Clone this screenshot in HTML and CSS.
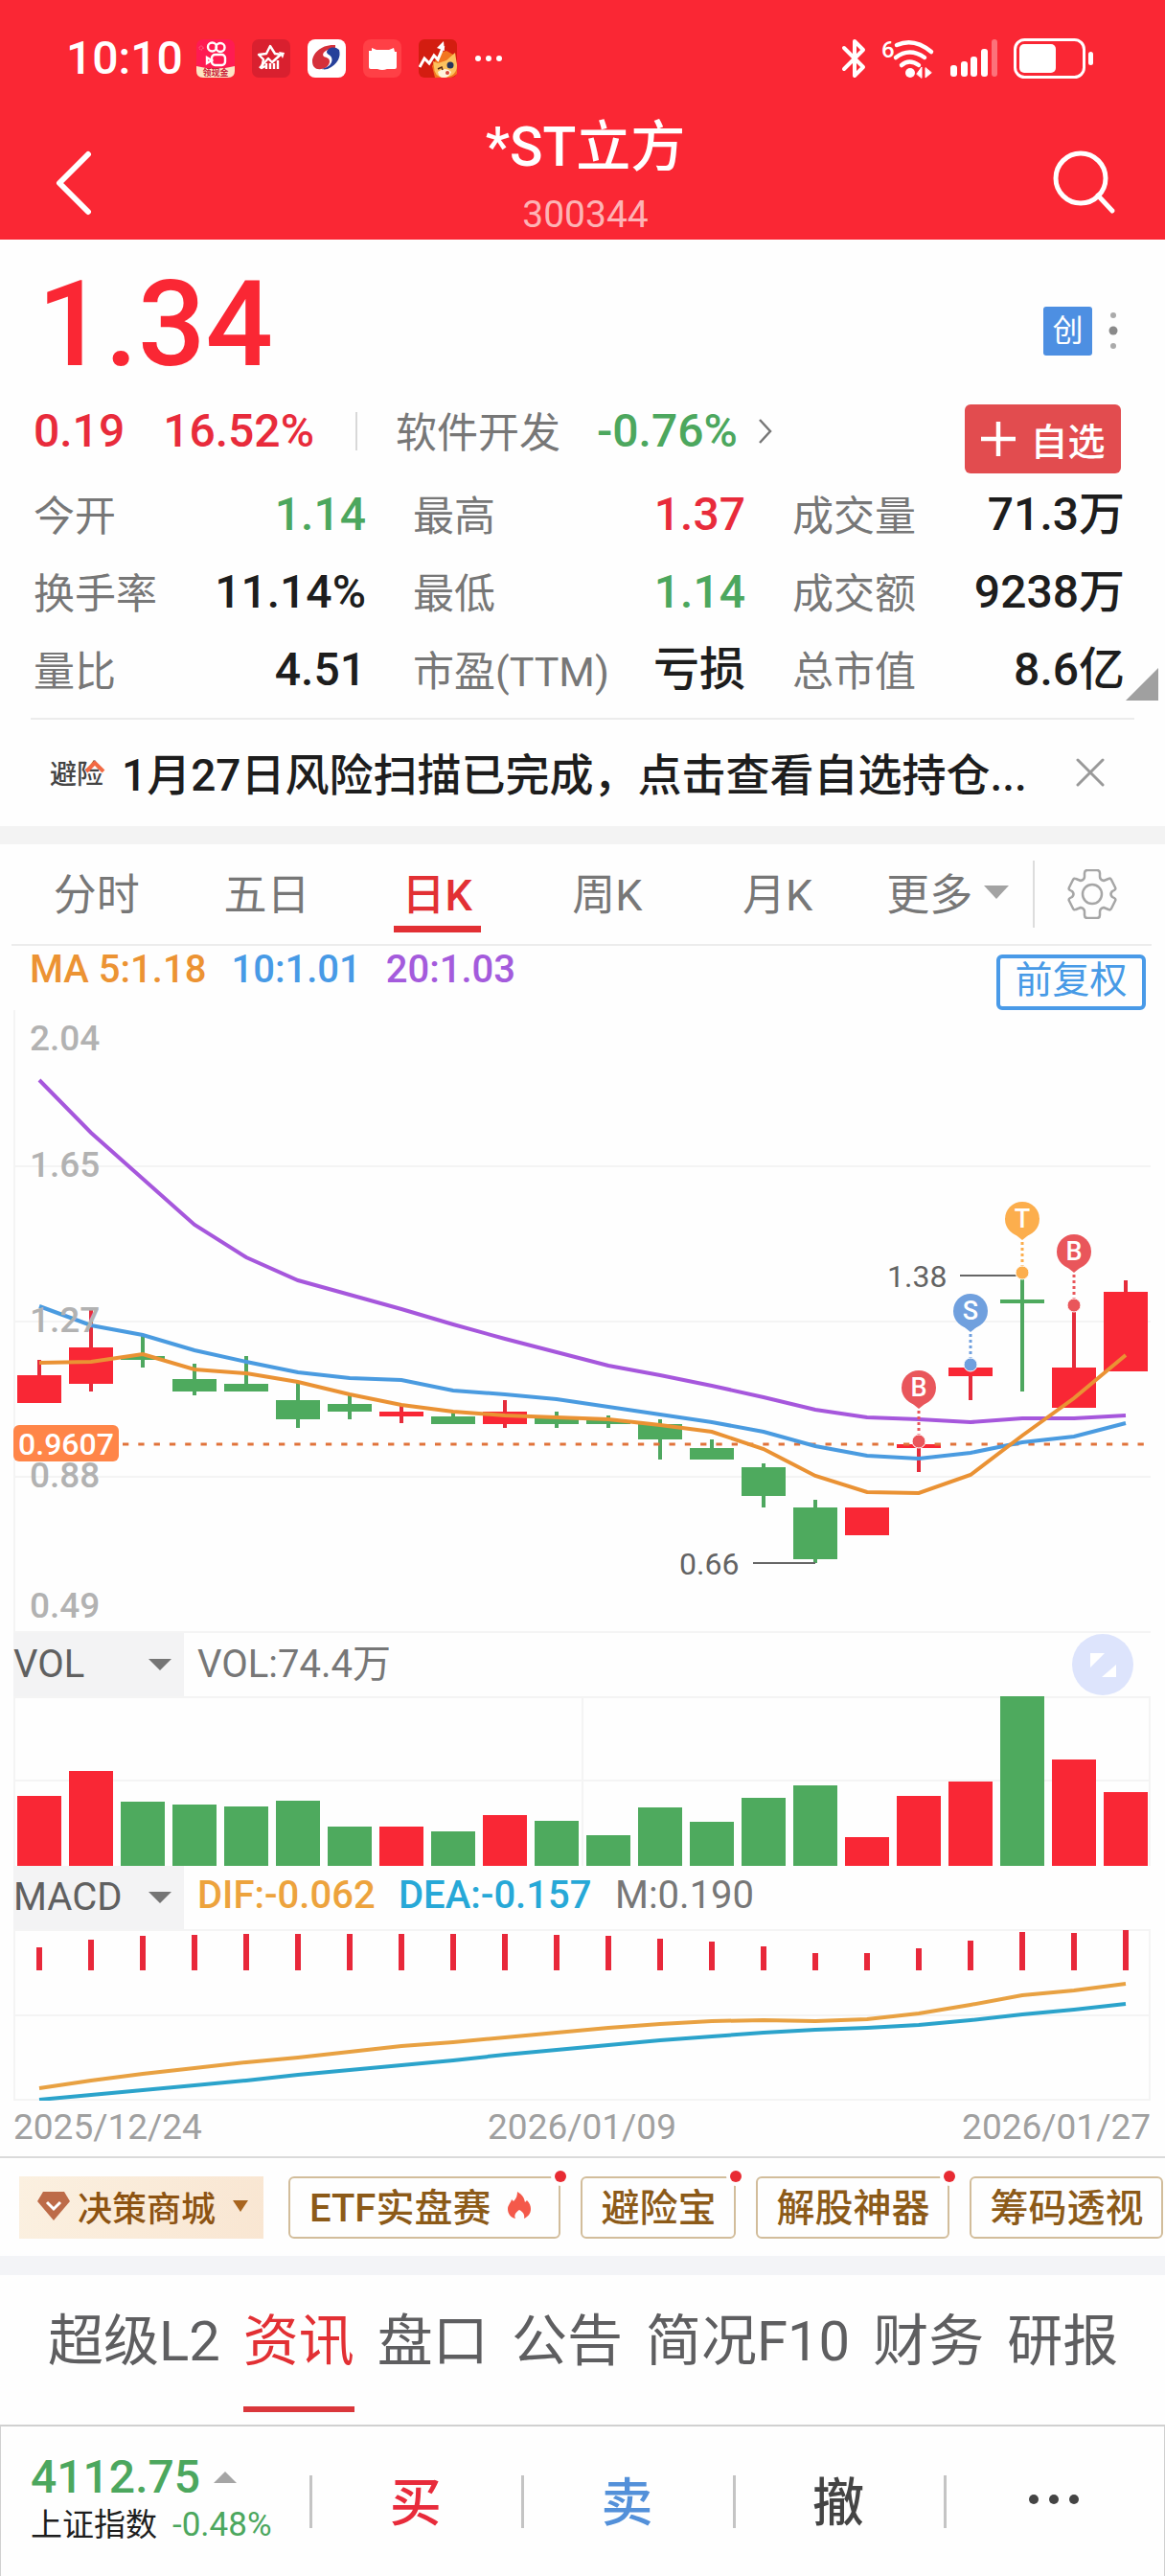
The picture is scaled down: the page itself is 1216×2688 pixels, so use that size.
FILE: index.html
```html
<!DOCTYPE html>
<html lang="zh-CN">
<head>
<meta charset="utf-8">
<meta name="viewport" content="width=device-width, initial-scale=1">
<title>*ST立方 300344</title>
<link rel="stylesheet" href="styles.css">
</head>
<body>
<header class="top">
  <div class="status">
    <span class="clock">10:10</span>
    <div class="apps">
      <svg width="40" height="40" viewBox="0 0 40 40"><rect width="40" height="40" rx="7" fill="#ff1b52"/><g fill="none" stroke="#fff" stroke-width="2.4"><circle cx="16.500" cy="8" r="4.500"/><circle cx="25" cy="8.500" r="4.500"/><rect x="16" y="16" width="14" height="11" rx="3.500"/><path d="M16 22l-5-3v6z"/></g><circle cx="5" cy="9" r="2" fill="none" stroke="#ff8aa0" stroke-dasharray="1 1"/><path d="M0 28q20 5 40 0v5q0 7-7 7H7q-7 0-7-7z" fill="#fde6c4"/><text x="20" y="38" class="mini">领现金</text></svg>
      <svg width="40" height="40" viewBox="0 0 40 40"><rect width="40" height="40" rx="7" fill="#d9202f"/><g fill="none" stroke="#fff" stroke-width="2.4" stroke-linejoin="round"><path d="M14 28l-4 2 2-9-5-5 8-1 4-8 5 8 7 1"/><path d="M8 30l9-10 4 4 10-9"/></g><path d="M28 13l6 1-2 6z" fill="#fff"/><path d="M15 25v6M19 25v6M23 25v6M27 22v9" stroke="#fff" stroke-width="2.400"/></svg>
      <svg width="40" height="40" viewBox="0 0 40 40"><rect width="40" height="40" rx="8" fill="#fff"/><path d="M29 6C14 5 5 15 5 23c0 6 4 9 9 8 5 0 9-4 9-8 0-3-3-4-6-5-3-3 2-8 12-9z" fill="#d5303a"/><path d="M33 11c2 7-1 15-12 20-4 1-6 0-6 0 8-2 12-7 10-12-1-3-5-3-5-6 1-4 8-7 13-2z" fill="#26409a"/></svg>
      <svg width="40" height="40" viewBox="0 0 40 40"><rect width="40" height="40" rx="8" fill="#ff4046"/><path d="M9 9l5 2h13l5-2 1 4h2v16q0 2-2 2h-8q-5 2-10 0H8q-2 0-2-2V12h3z" fill="#fff"/></svg>
      <svg width="40" height="40" viewBox="0 0 40 40"><rect width="40" height="40" rx="6" fill="#d31d10"/><path d="M22 14l7-2 7 4 4 10v10q-4 4-8 4H17l-3-12z" fill="#f2761f"/><path d="M15 23l5 2 9-3 9-8 2 13q0 12-14 13-10-1-10-11z" fill="#fcc25f"/><path d="M20 34q8-6 14 0-2 6-8 6-5 0-6-6z" fill="#fff3dd"/><path d="M1 29l5-9 5 5 5-8 4 4 6-14" fill="none" stroke="#fff" stroke-width="3"/><path d="M19 9l7-7 1 10z" fill="#fff"/><circle cx="33" cy="27" r="3.500" fill="#26345c"/><path d="M20 31l4-2 1 3" fill="none" stroke="#5a2b17" stroke-width="1.500"/><circle cx="30" cy="35" r="2" fill="#d64a3c"/></svg>
      <svg width="30" height="40" viewBox="0 0 30 40" fill="#fff"><circle cx="4" cy="20" r="3"/><circle cx="15" cy="20" r="3"/><circle cx="26" cy="20" r="3"/></svg>
    </div>
    <div class="signals">
      <svg width="26" height="42" viewBox="0 0 26 42" fill="none" stroke="#fff" stroke-width="4" stroke-linejoin="round" stroke-linecap="round"><path d="M3 10l20 20-9 9V3l9 9L3 32"/></svg>
      <svg width="56" height="42" viewBox="0 0 56 42" fill="none" stroke="#fff" stroke-width="4.500" stroke-linecap="round"><text x="0" y="20" class="wifi-gen">6</text><path d="M16 7q18-8 36 7M15 20q14-11 30 0M21 28q8-7 18 0"/><circle cx="30" cy="36" r="5" fill="#fff" stroke="none"/><path d="M37 37l5-7v11zM46 31v10l6-5z" fill="#fff" stroke="#fff" stroke-width="1"/></svg>
      <svg width="50" height="42" viewBox="0 0 50 42" fill="#fff"><rect y="28" width="7" height="12" rx="3"/><rect x="11" y="24" width="7" height="16" rx="3"/><rect x="21" y="19" width="7" height="21" rx="3"/><rect x="32" y="11" width="7" height="29" rx="3"/><rect x="43" y="1" width="6" height="39" rx="3" opacity=".35"/></svg>
      <svg width="84" height="42" viewBox="0 0 84 42"><rect x="1.500" y="1.500" width="72" height="39" rx="10" fill="none" stroke="#fff" stroke-width="3"/><rect x="6" y="6" width="38" height="30" rx="5" fill="#fff"/><rect x="78" y="14" width="5" height="14" rx="2.500" fill="#fff"/></svg>
    </div>
  </div>
  <div class="titlebar">
    <button class="icon-btn" aria-label="返回"><svg width="40" height="68" viewBox="0 0 40 68" fill="none" stroke="#fff" stroke-width="6" stroke-linecap="round" stroke-linejoin="round"><path d="M36 4L6 34l30 30"/></svg></button>
    <div class="name"><h1>*ST立方</h1><p>300344</p></div>
    <button class="icon-btn end" aria-label="搜索"><svg width="68" height="68" viewBox="0 0 68 68" fill="none" stroke="#fff" stroke-width="5" stroke-linecap="round"><circle cx="30" cy="29" r="26"/><path d="M48 47l15 16"/></svg></button>
  </div>
</header>

<main>
<section class="quote">
  <div class="price-row">
    <strong class="price">1.34</strong>
    <div class="marks"><span class="badge">创</span>
      <svg width="10" height="42" viewBox="0 0 10 42" fill="#8a8a8a"><circle cx="5" cy="5" r="3" fill="#aaa"/><circle cx="5" cy="21" r="4.500"/><circle cx="5" cy="37" r="3" fill="#aaa"/></svg>
    </div>
  </div>
  <div class="change-row">
    <span class="num up">0.19</span>
    <span class="num up pct">16.52%</span>
    <a class="sector" href="#sector"><span class="label">软件开发</span><span class="num down">-0.76%</span>
      <svg width="14" height="28" viewBox="0 0 14 28" fill="none" stroke="#777" stroke-width="2.500"><path d="M1 2l11 12L1 26"/></svg></a>
    <button class="add"><svg width="38" height="38" viewBox="0 0 38 38" stroke="#fff" stroke-width="4.500"><path d="M1 19h36M19 1v36"/></svg>自选</button>
  </div>
  <dl class="stats">
    <div><dt>今开</dt><dd class="down">1.14</dd></div>
    <div><dt>最高</dt><dd class="up">1.37</dd></div>
    <div><dt>成交量</dt><dd>71.3万</dd></div>
    <div><dt>换手率</dt><dd>11.14%</dd></div>
    <div><dt>最低</dt><dd class="down">1.14</dd></div>
    <div><dt>成交额</dt><dd>9238万</dd></div>
    <div><dt>量比</dt><dd>4.51</dd></div>
    <div><dt>市盈(TTM)</dt><dd>亏损</dd></div>
    <div><dt>总市值</dt><dd>8.6亿</dd></div>
  </dl>
  <svg class="fold" width="34" height="34" viewBox="0 0 34 34" fill="#a0a0a0"><path d="M34 0v34H0z"/></svg>
</section>

<section class="notice">
  <span class="risk-logo">避险<svg width="22" height="15" viewBox="0 0 22 15" fill="none" stroke="#f26a44" stroke-width="4"><path d="M2 13l9-9 9 9"/></svg></span>
  <a class="notice-text" href="#risk">1月27日风险扫描已完成，点击查看自选持仓...</a>
  <button class="close" aria-label="关闭"><svg width="30" height="30" viewBox="0 0 30 30" stroke="#999" stroke-width="3" stroke-linecap="round"><path d="M2 2l26 26M28 2L2 28"/></svg></button>
</section>

<section class="chart-block">
  <nav class="periods">
    <button>分时</button>
    <button>五日</button>
    <button class="active">日K</button>
    <button>周K</button>
    <button>月K</button>
    <button class="more">更多<svg width="26" height="14" viewBox="0 0 26 14" fill="#a3a3a3"><path d="M0 0h26L13 14z"/></svg></button>
    <button class="settings" aria-label="设置"><svg width="52" height="52" viewBox="0 0 52 52" fill="none" stroke="#a6a6a6" stroke-width="2.500" stroke-linejoin="round"><path d="M18 4q0-3 3-3h10q3 0 3 3v4q0 3 4 4l5-2q2-1 3 1l4 8q1 2-1 3l-2 1q-3 3 0 6l2 1q2 1 1 3l-4 8q-1 2-3 1l-5-2q-4 1-4 4v4q0 3-3 3H21q-3 0-3-3v-4q0-3-4-4l-5 2q-2 1-3-1l-4-8q-1-2 1-3l2-1q3-3 0-6l-2-1q-2-1-1-3l4-8q1-2 3-1l5 2q4-1 4-4z"/><circle cx="26" cy="26" r="10"/></svg></button>
  </nav>
  <div class="ma-row">
    <span class="ma5">MA 5:1.18</span><span class="ma10">10:1.01</span><span class="ma20">20:1.03</span>
    <button class="adjust">前复权</button>
  </div>

  <svg class="plot" viewBox="14 1054 1187 650" role="img" aria-label="日K线">
    <g class="grid"><path d="M15 1054v650M14 1217h1187M14 1379h1187M14 1541h1187M14 1703h1187"/></g>
    <g class="r">
      <path class="wick" d="M41 1419v20M95 1366v86M419 1465v20M527 1461v29M959 1504v32M1013 1427v34M1121 1362v70M1175 1336v20"/>
      <path d="M18 1435h46v29h-46zM72 1406h46v38h-46zM396 1473h46v5h-46zM504 1473h46v13h-46zM882 1573h46v29h-46zM936 1507h46v4h-46zM990 1427h46v9h-46zM1098 1427h46v42h-46zM1152 1348h46v83h-46z"/>
    </g>
    <g class="g">
      <path class="wick" d="M149 1394v33M203 1423v33M257 1415v35M311 1443v47M365 1456v25M473 1474v6M581 1473v17M635 1477v13M689 1481v42M743 1502v12M797 1527v46M851 1565v66M1067 1331v121"/>
      <path d="M126 1415h46v4h-46zM180 1439h46v13h-46zM234 1444h46v8h-46zM288 1461h46v20h-46zM342 1465h46v8h-46zM450 1478h46v8h-46zM558 1479h46v7h-46zM612 1482h46v4h-46zM666 1486h46v16h-46zM720 1511h46v12h-46zM774 1531h46v30h-46zM828 1573h46v54h-46zM1044 1356h46v4h-46z"/>
    </g>
    <path d="M128 1507h1073" stroke="#e0733b" stroke-width="3" stroke-dasharray="6.300 10"/>
    <g class="line">
      <polyline stroke="#a657dc" points="41,1127 95,1182 149,1230 203,1278 257,1312 311,1336 365,1351 419,1366 473,1382 527,1397 581,1411 635,1425 689,1435 743,1446 797,1458 851,1471 905,1479 959,1481 1013,1484 1067,1480 1121,1480 1175,1477"/>
      <polyline stroke="#4a9be0" points="41,1363 95,1383 149,1393 203,1409 257,1421 311,1432 365,1438 419,1440 473,1451 527,1455 581,1460 635,1468 689,1476 743,1484 797,1494 851,1509 905,1519 959,1522 1013,1516 1067,1505 1121,1499 1175,1485"/>
      <polyline stroke="#ea9234" points="41,1422 95,1421 149,1413 203,1429 257,1433 311,1442 365,1455 419,1466 473,1473 527,1477 581,1479 635,1481 689,1487 743,1494 797,1512 851,1540 905,1557 959,1558 1013,1539 1067,1498 1121,1459 1175,1414"/>
    </g>
    <g class="axis"><text x="31" y="1096">2.04</text><text x="31" y="1228">1.65</text><text x="31" y="1390">1.27</text><text x="31" y="1552">0.88</text><text x="31" y="1688">0.49</text></g>
    <rect x="14" y="1487" width="110" height="38" rx="6" fill="#ff8548"/>
    <text class="cost" x="69" y="1518">0.9607</text>
    <path d="M1002 1331h59M786 1631h65" stroke="#666" stroke-width="2"/>
    <g class="extreme"><text x="926" y="1343">1.38</text><text x="709" y="1643">0.66</text></g>
    <g class="pin" transform="translate(959 1448)" fill="#e9565b"><path class="stem" stroke="#e9565b" d="M0 24v26"/><path d="M-10 14L0 22l10-8z"/><circle r="18"/><circle class="dot" cy="56" r="7"/><text y="9">B</text></g>
    <g class="pin" transform="translate(1013 1368)" fill="#70a0de"><path class="stem" stroke="#70a0de" d="M0 24v26"/><path d="M-10 14L0 22l10-8z"/><circle r="18"/><circle class="dot" cy="56" r="7"/><text y="9">S</text></g>
    <g class="pin" transform="translate(1067 1272)" fill="#fcae4d"><path class="stem" stroke="#fcae4d" d="M0 24v26"/><path d="M-10 14L0 22l10-8z"/><circle r="18"/><circle class="dot" cy="56" r="7"/><text y="9">T</text></g>
    <g class="pin" transform="translate(1121 1306)" fill="#e9565b"><path class="stem" stroke="#e9565b" d="M0 24v26"/><path d="M-10 14L0 22l10-8z"/><circle r="18"/><circle class="dot" cy="56" r="7"/><text y="9">B</text></g>
  </svg>

  <div class="indicator">
    <div class="picker"><select aria-label="指标一"><option>VOL</option></select><svg width="24" height="12" viewBox="0 0 24 12" fill="#757575"><path d="M0 0h24L12 12z"/></svg></div>
    <span class="vol">VOL:74.4万</span>
    <button class="expand" aria-label="全屏"><svg width="64" height="64" viewBox="0 0 64 64"><circle cx="32" cy="32" r="32" fill="#dde4fc"/><path d="M19 20h15L19 35zM46 32v13H31z" fill="#fff"/></svg></button>
  </div>
  <svg class="plot" viewBox="14 1770 1187 177" role="img" aria-label="成交量">
    <g class="grid"><path d="M15 1770v177M1200 1770v177M14 1771h1187M14 1858h1187M608 1770v177"/></g>
    <path class="r" d="M18 1874h46v73h-46zM72 1848h46v99h-46zM396 1906h46v41h-46zM504 1894h46v53h-46zM882 1917h46v30h-46zM936 1874h46v73h-46zM990 1859h46v88h-46zM1098 1836h46v111h-46zM1152 1870h46v77h-46z"/>
    <path class="g" d="M126 1880h46v67h-46zM180 1883h46v64h-46zM234 1885h46v62h-46zM288 1879h46v68h-46zM342 1906h46v41h-46zM450 1911h46v36h-46zM558 1900h46v47h-46zM612 1915h46v32h-46zM666 1886h46v61h-46zM720 1901h46v46h-46zM774 1876h46v71h-46zM828 1863h46v84h-46zM1044 1770h46v177h-46z"/>
  </svg>
  <div class="indicator">
    <div class="picker"><select aria-label="指标二"><option>MACD</option></select><svg width="24" height="12" viewBox="0 0 24 12" fill="#757575"><path d="M0 0h24L12 12z"/></svg></div>
    <div class="macd"><span class="dif">DIF:-0.062</span><span class="dea">DEA:-0.157</span><span>M:0.190</span></div>
  </div>
  <svg class="plot" viewBox="14 2013 1187 179" role="img" aria-label="MACD">
    <g class="grid"><path d="M15 2013v179M1200 2013v179M14 2014h1187M14 2103h1187M14 2191h1187"/></g>
    <path stroke="#e8283a" stroke-width="6" d="M41 2032v24M95 2024v32M149 2020v36M203 2019v37M257 2018v38M311 2018v38M365 2018v38M419 2018v38M473 2018v38M527 2018v38M581 2019v37M635 2020v36M689 2023v33M743 2026v30M797 2031v25M851 2038v18M905 2038v18M959 2033v23M1013 2025v31M1067 2016v40M1121 2017v39M1175 2014v42"/>
    <g class="line">
      <polyline stroke="#e8a142" points="41,2179 95,2171 149,2164 203,2158 257,2152 311,2147 365,2141 419,2135 473,2131 527,2126 581,2121 635,2116 689,2112 743,2109 797,2108 851,2109 905,2107 959,2101 1013,2092 1067,2082 1121,2077 1175,2070"/>
      <polyline stroke="#2ba3cb" points="41,2191 95,2186 149,2181 203,2176 257,2171 311,2165 365,2160 419,2155 473,2150 527,2144 581,2139 635,2134 689,2129 743,2125 797,2121 851,2118 905,2116 959,2113 1013,2108 1067,2102 1121,2097 1175,2091"/>
    </g>
  </svg>
  <div class="dates"><time>2025/12/24</time><time>2026/01/09</time><time>2026/01/27</time></div>
</section>

<nav class="tools">
  <button class="mall"><svg width="36" height="32" viewBox="0 0 36 32"><path d="M7 1h22l6 10-17 20L1 11z" fill="#bd6b48"/><path d="M11 12l7 7 7-7" fill="none" stroke="#fff" stroke-width="3"/></svg>决策商城<svg class="caret" width="16" height="12" viewBox="0 0 16 12" fill="#a8651f"><path d="M0 0h16L8 12z"/></svg></button>
  <button class="tool dot">ETF实盘赛<svg width="24" height="28" viewBox="0 0 24 28"><path d="M10 0c5 3 7 6 8 11l2-2c3 3 4 6 4 9 0 5-3 8-7 10 1-4-1-7-5-9-3 2-6 5-4 9-5-1-8-5-8-10 0-4 3-6 4-10l2 2c3-3 4-6 4-10z" fill="#f4594a"/></svg></button>
  <button class="tool dot">避险宝</button>
  <button class="tool dot">解股神器</button>
  <button class="tool">筹码透视</button>
</nav>

<nav class="tabs">
  <a href="#l2">超级L2</a>
  <a href="#news" class="active">资讯</a>
  <a href="#book">盘口</a>
  <a href="#notices">公告</a>
  <a href="#f10">简况F10</a>
  <a href="#finance">财务</a>
  <a href="#reports">研报</a>
</nav>
</main>

<footer class="trade">
  <div class="index">
    <div class="index-value down">4112.75<svg width="24" height="12" viewBox="0 0 24 12" fill="#a5a5a5"><path d="M0 12h24L12 0z"/></svg></div>
    <div class="index-name">上证指数<span class="down">-0.48%</span></div>
  </div>
  <button class="buy">买</button>
  <button class="sell">卖</button>
  <button>撤</button>
  <button aria-label="更多"><svg width="54" height="12" viewBox="0 0 54 12" fill="#444"><circle cx="6" cy="6" r="5"/><circle cx="27" cy="6" r="5"/><circle cx="48" cy="6" r="5"/></svg></button>
</footer>
</body>
</html>
```

FILE: styles.css
```css
* {
  box-sizing: border-box;
  margin: 0;
  padding: 0;
}

body {
  background: #fefefe;
  color: #1d1d1d;
  font-family: Roboto, "Noto Sans CJK SC", sans-serif;
  font-weight: 500;
  overflow-x: hidden;
}

button,
select {
  border: 0;
  background: none;
  color: inherit;
  font: inherit;
}

a {
  color: inherit;
  text-decoration: none;
}

svg {
  display: block;
  flex: none;
}

.up { color: #e82b3b; }
.down { color: #4ca75e; }

/* Header */
.top {
  background: #fa2734;
  color: #fff;
}

.status {
  display: flex;
  align-items: center;
  padding: 36px 74px 0 69px;
}

.clock {
  font-size: 48px;
  line-height: 50px;
}

.apps {
  display: flex;
  gap: 18px;
  margin-left: 14px;
}

.mini {
  fill: #c8203a;
  font-size: 9px;
  font-weight: 700;
  text-anchor: middle;
}

.signals {
  display: flex;
  gap: 16px;
  margin-left: auto;
}

.signals svg { overflow: visible; }

.wifi-gen {
  fill: #fff;
  stroke: none;
  font-size: 24px;
}

.titlebar {
  display: grid;
  grid-template-columns: 1fr auto 1fr;
  padding: 32px 50px 4px 56px;
}

.icon-btn {
  align-self: end;
  justify-self: start;
  height: 110px;
}

.icon-btn.end { justify-self: end; }

.name { text-align: center; }

.name h1 {
  font-size: 57px;
  font-weight: 500;
  line-height: 72px;
}

.name p {
  margin-top: 12px;
  color: #fdb3b5;
  font-size: 39px;
  font-weight: 400;
  line-height: 44px;
}

/* Quote */
.quote {
  position: relative;
  padding: 24px 42px 10px 35px;
}

.price-row,
.marks,
.change-row,
.sector,
.add {
  display: flex;
  align-items: center;
}

.price-row { justify-content: space-between; }

.price {
  padding-left: 4px;
  color: #fa2734;
  font-size: 124px;
  font-weight: 500;
  line-height: 130px;
}

.marks {
  gap: 17px;
  margin: 12px 7px 0 0;
}

.badge {
  width: 51px;
  border-radius: 3px;
  background: #4d8fe2;
  color: #fff;
  font-size: 32px;
  font-weight: 400;
  line-height: 51px;
  text-align: center;
}

.change-row { height: 92px; }

.num {
  font-size: 48px;
  line-height: 60px;
}

.pct { margin-left: 40px; }

.sector {
  gap: 38px;
  margin-left: 43px;
  padding-left: 42px;
  background: linear-gradient(#d8d8d8, #d8d8d8) left / 2px 40px no-repeat;
}

.sector svg { margin-left: -16px; }

.label {
  padding-top: 4px;
  color: #777;
  font-size: 43px;
  font-weight: 400;
  line-height: 60px;
}

.add {
  justify-content: center;
  gap: 14px;
  width: 163px;
  height: 72px;
  margin: 16px 4px 0 auto;
  border-radius: 6px;
  background: #e24c4f;
  color: #fff;
  font-size: 39px;
}

.stats {
  display: grid;
  grid-template-columns: repeat(3, 1fr);
  column-gap: 49px;
}

.stats div {
  display: flex;
  justify-content: space-between;
  height: 81px;
  line-height: 81px;
}

.stats dt {
  padding-top: 3px;
  color: #777;
  font-size: 43px;
  font-weight: 400;
}

.stats dd { font-size: 48px; }

.fold {
  position: absolute;
  right: 7px;
  bottom: 18px;
}

/* Risk notice */
.notice {
  display: flex;
  align-items: center;
  height: 113px;
  margin: 0 32px;
  padding: 4px 31px 0 20px;
  border-top: 2px solid #ececec;
}

.risk-logo {
  position: relative;
  margin-right: 19px;
  color: #444;
  font-size: 28px;
  line-height: 40px;
}

.risk-logo svg {
  position: absolute;
  top: 3px;
  right: -2px;
}

.notice-text {
  font-size: 46px;
  line-height: 60px;
  white-space: nowrap;
}

.close {
  margin: -6px 0 0 auto;
}

/* Chart */
.chart-block { border-top: 19px solid #f3f3f3; }

.periods {
  display: flex;
  height: 106px;
  margin: 0 14px 0 12px;
  border-bottom: 2px solid #ececec;
}

.periods button {
  position: relative;
  display: flex;
  flex: 1;
  align-items: center;
  justify-content: center;
  padding-bottom: 5px;
  color: #777;
  font-size: 45px;
  font-weight: 400;
}

.periods .active {
  color: #e23034;
  font-weight: 500;
}

.periods .active::after {
  position: absolute;
  bottom: 12px;
  width: 91px;
  height: 7px;
  background: #e23034;
  content: "";
}

.periods .more { gap: 12px; }

.periods .settings {
  flex: 0 0 124px;
  padding: 0;
  background: linear-gradient(#ddd, #ddd) left / 2px 70px no-repeat;
}

.ma-row {
  display: flex;
  gap: 26px;
  height: 67px;
  padding: 5px 20px 0 31px;
  font-size: 40px;
  line-height: 40px;
}

.ma5 { color: #ec9333; }
.ma10 { color: #479ae6; }
.ma20 { color: #a45bdc; }

.adjust {
  width: 156px;
  height: 58px;
  margin: 4px 0 0 auto;
  padding-bottom: 4px;
  border: 4px solid #499ae8;
  border-radius: 6px;
  color: #479ae6;
  font-size: 39px;
  font-weight: 400;
  line-height: 46px;
}

.plot {
  width: calc(100% - 29px);
  height: auto;
  margin-left: 14px;
}

.grid {
  fill: none;
  stroke: #f4f4f4;
  stroke-width: 2;
}

.r { fill: #f92735; }
.g { fill: #4eaa5e; }

.wick {
  fill: none;
  stroke: #e52c3b;
  stroke-width: 4;
}

.g .wick { stroke: #4ea75f; }

.line {
  fill: none;
  stroke-width: 4;
}

.axis {
  fill: #b2b2b2;
  font-size: 37px;
}

.cost {
  fill: #fff;
  font-size: 32px;
  text-anchor: middle;
}

.extreme {
  fill: #636363;
  font-size: 32px;
  font-weight: 400;
}

.pin text {
  fill: #fff;
  font-size: 27px;
  text-anchor: middle;
}

.stem {
  stroke-width: 3;
  stroke-dasharray: 3 3;
}

.dot[r] {
  stroke: #fff;
  stroke-width: 1;
}

.indicator {
  display: flex;
  align-items: center;
  height: 66px;
  margin: 0 15px 0 14px;
  color: #777;
  font-size: 40px;
  font-weight: 400;
  line-height: 60px;
}

.picker {
  display: grid;
  align-items: center;
  width: 178px;
  height: 66px;
  margin-right: 14px;
  background: #f3f3f4;
  color: #606060;
}

.picker select,
.picker svg {
  grid-area: 1 / 1;
}

.picker select {
  width: 100%;
  height: 60px;
  padding-bottom: 6px;
  appearance: none;
}

.picker svg {
  justify-self: end;
  margin-right: 13px;
  pointer-events: none;
}

.expand { margin: 0 18px 0 auto; }

.macd {
  display: grid;
  grid-template-columns: 210px 226px auto;
  padding-bottom: 4px;
}

.dif { color: #eda33d; font-weight: 500; }
.dea { color: #27a8d7; font-weight: 500; }

.dates {
  display: flex;
  justify-content: space-between;
  height: 58px;
  padding: 0 15px 0 14px;
  color: #a0a0a0;
  font-size: 37px;
  font-weight: 400;
  line-height: 56px;
}

/* Tool pills */
.tools {
  display: flex;
  gap: 21px;
  overflow: hidden;
  padding: 19px 0 18px 20px;
  border-top: 2px solid #dadada;
  border-bottom: 20px solid #f3f4f7;
  color: #8c5a18;
}

.tools button {
  display: flex;
  flex: none;
  align-items: center;
  height: 65px;
  white-space: nowrap;
}

.tools .mall {
  gap: 7px;
  width: 255px;
  margin-right: 5px;
  padding: 0 0 4px 18px;
  background: linear-gradient(100deg, #fbf0e0, #f9e6d2);
  color: #8d5312;
  font-size: 36px;
}

.mall .caret { margin-left: 11px; }

.tools .tool {
  position: relative;
  gap: 18px;
  padding: 0 19px 6px;
  border: 2px solid #d2bd9b;
  border-radius: 6px;
  font-size: 40px;
}

.tools .tool:nth-child(2) { padding: 0 29px 6px 20px; }

.tool.dot::after {
  position: absolute;
  top: -8px;
  right: -8px;
  width: 12px;
  height: 12px;
  border-radius: 50%;
  background: #e82b33;
  box-shadow: 0 0 0 4px #fefefe;
  content: "";
}

/* Section tabs */
.tabs {
  display: flex;
  gap: 24px;
  height: 156px;
  padding: 36px 0 0 50px;
  color: #5e5e60;
  font-size: 58px;
  font-weight: 400;
  line-height: 66px;
  white-space: nowrap;
}

.tabs a { height: 107px; }

.tabs .active {
  border-bottom: 6px solid #da373b;
  color: #e23034;
}

/* Trade bar */
.trade {
  display: grid;
  grid-template-columns: 323fr 221fr 221fr 221fr 230fr;
  height: 158px;
  border: 1px solid #d0d0d0;
  border-width: 2px 1px 0;
}

.trade button {
  display: flex;
  align-items: center;
  justify-content: center;
  padding-bottom: 5px;
  background: linear-gradient(#c4c4c4, #c4c4c4) left / 3px 55px no-repeat;
  color: #444;
  font-size: 54px;
}

.trade .buy { color: #e82b3b; }
.trade .sell { color: #5390d9; }

.index { padding: 25px 0 0 31px; }

.index-value {
  display: flex;
  align-items: center;
  gap: 14px;
  font-size: 48px;
  line-height: 56px;
}

.index-name {
  display: flex;
  gap: 16px;
  color: #1d1d1d;
  font-size: 33px;
  font-weight: 400;
  line-height: 44px;
}

.index-name span { font-size: 35px; }
```
